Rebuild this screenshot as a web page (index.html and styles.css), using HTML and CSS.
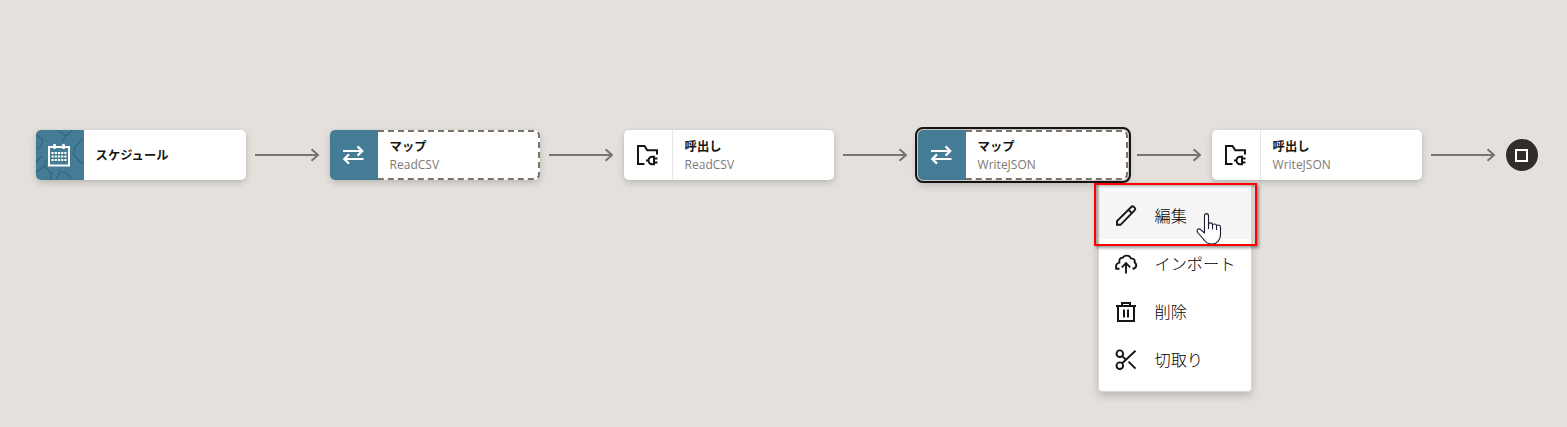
FILE: index.html
```html
<!DOCTYPE html>
<html lang="ja">
<head>
<meta charset="utf-8">
<title>統合フロー</title>
<link rel="stylesheet" href="styles.css">
</head>
<body>
<svg class="defs" aria-hidden="true">
  <symbol id="arrow" viewBox="0 0 64 16"><path d="M0 8H63M56.500 2.300L63 8L56.500 13.700" fill="none" stroke="#7a736e" stroke-width="2"/></symbol>
  <symbol id="map" viewBox="0 0 24 24"><path d="M2 8H21M16.500 3.400L21.200 8L16.500 12.600M22.500 16H3.500M8 11.400L3.300 16L8 20.600" fill="none" stroke="#fff" stroke-width="2.200"/></symbol>
  <symbol id="invoke" viewBox="0 0 24 24"><path d="M9.500 21H3V3H9.500L12.300 7.300H22V11.500" fill="none" stroke="#161513" stroke-width="2"/><path d="M11 17.500H13.500M19 13.700H17.300A3.800 3.800 0 0 0 17.300 21.300H19ZM19 15.500H22.500M19 19.500H22.500" fill="none" stroke="#161513" stroke-width="2"/></symbol>
</svg>
<main class="canvas">
  <div class="flow">
    <div class="card">
      <div class="tile teal textured">
        <svg class="veins" viewBox="0 0 48 50"><path d="M0 5L7 10L4 17L0 20M21 0L30 6L37 0M30 6L26 12M47 9L39 17L37 24L43 31L48 34M0 42L8 36L11 30M8 36L16 44L14 50M0 32L6 26M22 40L31 44L37 50M20 50L24 42" fill="none" stroke="#32687f" stroke-width="1.300"/></svg>
        <svg class="icon" viewBox="0 0 24 24"><path d="M2 4H22V22.500H2Z" fill="none" stroke="#fff" stroke-width="2"/><path d="M7.500 1V6M16.500 1V6" stroke="#fff" stroke-width="2.500"/><path d="M4.500 10H19.500M4.500 13.500H19.500M4.500 17H19.500" stroke="#fff" stroke-width="2" stroke-dasharray="2.200 1"/></svg>
      </div>
      <div class="body"><b class="title">スケジュール</b></div>
    </div>
    <svg class="arrow"><use href="#arrow"/></svg>
    <div class="card">
      <div class="tile teal"><svg class="icon"><use href="#map"/></svg></div>
      <div class="body"><b class="title">マップ</b><span class="sub">ReadCSV</span>
        <svg class="dash" viewBox="0 0 162 50"><path d="M0 1H156Q161 1 161 6V44Q161 49 156 49H0"/></svg></div>
    </div>
    <svg class="arrow"><use href="#arrow"/></svg>
    <div class="card">
      <div class="tile plain"><svg class="icon"><use href="#invoke"/></svg></div>
      <div class="body"><b class="title">呼出し</b><span class="sub">ReadCSV</span></div>
    </div>
    <svg class="arrow"><use href="#arrow"/></svg>
    <div class="card selected">
      <div class="tile teal"><svg class="icon"><use href="#map"/></svg></div>
      <div class="body"><b class="title">マップ</b><span class="sub">WriteJSON</span>
        <svg class="dash" viewBox="0 0 162 50"><path d="M0 1H156Q161 1 161 6V44Q161 49 156 49H0"/></svg></div>
    </div>
    <svg class="arrow"><use href="#arrow"/></svg>
    <div class="card">
      <div class="tile plain"><svg class="icon"><use href="#invoke"/></svg></div>
      <div class="body"><b class="title">呼出し</b><span class="sub">WriteJSON</span></div>
    </div>
    <svg class="arrow"><use href="#arrow"/></svg>
    <div class="end"><svg class="stop" viewBox="0 0 13 13"><path d="M1 1H12V12H1Z" fill="none" stroke="#fff" stroke-width="2"/></svg></div>
  </div>

  <div class="menu">
    <div class="item active">
      <svg class="icon" viewBox="0 0 24 24"><path d="M3 21.800V18.100L17.500 3.800Q18.500 2.800 19.800 3.900L20.800 4.900Q21.800 6.100 20.800 7.100L6.500 21.800ZM14.500 6.800L17.900 10.200" fill="none" stroke="#161513" stroke-width="1.900"/></svg>
      <span class="label">編集</span>
    </div>
    <div class="item">
      <svg class="icon" viewBox="0 0 24 24"><g transform="translate(0 .9)" fill="none" stroke="#161513" stroke-width="1.900"><path d="M5.500 16.800H2.200C1.600 14 2.400 11.500 5.300 10.800C4.800 7 6.800 5.600 9 5.600C10.300 3.300 15.200 2.600 17 6.500C20 6.300 21.300 8.600 20.700 10.600C23.200 12.500 22.700 16.800 18.500 16.800"/><path d="M12 21.500V11.500M7.800 15.500L12 11.300L16.200 15.500"/></g></svg>
      <span class="label">インポート</span>
    </div>
    <div class="item">
      <svg class="icon" viewBox="0 0 24 24"><path d="M2 7H22M8 7V4H16V7M4 7V22H20V7M10 10.500V18.500M14 10.500V18.500" fill="none" stroke="#161513" stroke-width="2"/></svg>
      <span class="label">削除</span>
    </div>
    <div class="item">
      <svg class="icon" viewBox="0 0 24 24"><g transform="translate(0 .7)" fill="none" stroke="#161513" stroke-width="1.900"><circle cx="5.800" cy="6" r="3.300"/><circle cx="5.800" cy="18" r="3.300"/><path d="M8.200 8.400L12 12M8.200 15.600L21.500 3M14.500 14L21.500 21"/></g></svg>
      <span class="label">切取り</span>
    </div>
  </div>
  <svg class="pointer" viewBox="0 0 26 34"><path d="M8.500 21V4C8.500 .8 12.500 .8 12.500 4V12.500C12.500 10.300 16.500 10.300 16.500 12.500V13.500C16.500 11.500 20.500 11.500 20.500 13.500V14.500C20.500 12.500 24.500 12.500 24.500 15V22.500C24.500 28 21 32 16 32C11 32 9 30 7 26.500L2 21C-.3 18 2.500 15.500 5 17.800Z" fill="#fff" stroke="#1b1b2f" stroke-width="1.100" stroke-linejoin="round"/><path d="M12.500 12V17M16.500 13V17.500M20.500 14V18" stroke="#1b1b2f" stroke-width="1.100"/></svg>
  <div class="marker"></div>
</main>
</body>
</html>
```
FILE: styles.css
```css
* { box-sizing: border-box; }
body { margin: 0; font-family: "Open Sans", "Noto Sans CJK JP", sans-serif; color: #161513; }
.defs { position: absolute; width: 0; height: 0; }
.canvas { position: relative; width: 1567px; height: 427px; overflow: hidden; background: #e4e1dd; padding: 130px 0 0 35.600px; }
.flow { display: flex; align-items: center; gap: 10px; }
.card { display: flex; flex: none; width: 210px; height: 50px; border-radius: 5px; background: #fff; box-shadow: 0 3px 7px rgba(0, 0, 0, .17), 0 0 2px rgba(0, 0, 0, .08); }
.selected { outline: 2px solid #161513; outline-offset: 1px; box-shadow: 0 0 0 1px #c9c5c1, 0 5px 8px rgba(0, 0, 0, .2); }
.tile { position: relative; display: flex; flex: none; align-items: center; justify-content: center; width: 48px; height: 50px; border-radius: 5px 0 0 5px; overflow: hidden; }
.teal { background: #457c95; }
.plain { width: 49px; border-right: 1px solid #e8e7e6; }
.veins { position: absolute; inset: 0; width: 48px; height: 50px; }
.icon { position: relative; flex: none; width: 24px; height: 24px; }
.tile .icon { margin-right: 1px; }
.body { position: relative; display: flex; flex: 1; flex-direction: column; justify-content: center; padding: 2px 0 0 12px; }
.title { font-size: 12.300px; line-height: 18px; font-weight: 700; color: #161513; white-space: nowrap; }
.sub { font-size: 12px; line-height: 18px; font-weight: 400; color: #7d7975; }
.dash { position: absolute; inset: 0; width: 162px; height: 50px; }
.dash path { fill: none; stroke: #7a736e; stroke-width: 2; stroke-dasharray: 6 4; }
.arrow { flex: none; width: 64px; height: 16px; margin: 0 .8px 0 -.8px; }
.end { display: flex; flex: none; align-items: center; justify-content: center; width: 32px; height: 32px; border-radius: 50%; background: #312d2a; }
.stop { width: 13px; height: 13px; }
.menu { position: absolute; left: 1098px; top: 183px; width: 154px; height: 209px; padding: 8px 0; background: #fff; border: 1px solid #d8d5d1; border-top: 0; border-radius: 4px; box-shadow: 0 4px 8px rgba(0, 0, 0, .18); }
.item { display: flex; align-items: center; gap: 16.500px; height: 48px; padding-left: 15px; }
.active { background: #f5f5f5; }
.label { font-family: "Noto Sans CJK JP", sans-serif; font-size: 16.200px; line-height: 24px; font-weight: 300; color: #000; white-space: nowrap; }
.marker { position: absolute; left: 1094px; top: 183px; width: 163px; height: 63px; border: 2px solid #f00; box-shadow: 2px 2px 3px rgba(0, 0, 0, .4), inset 2px 2px 3px rgba(0, 0, 0, .25); }
.pointer { position: absolute; left: 1196px; top: 212px; width: 26px; height: 34px; }
```
